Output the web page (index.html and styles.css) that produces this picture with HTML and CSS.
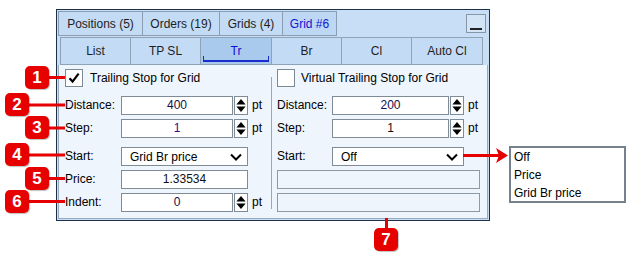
FILE: index.html
```html
<!DOCTYPE html>
<html lang="en">
<head>
    <meta charset="UTF-8">
    <title>Grid #6 - Trailing</title>
    <link rel="stylesheet" href="styles.css">
</head>
<body>
<div class="stage">
    <div class="panel">
        <div class="tabs">
            <div class="tab t-pos">Positions (5)</div>
            <div class="tab t-ord">Orders (19)</div>
            <div class="tab t-grids">Grids (4)</div>
            <div class="tab t-grid active">Grid #6</div>
            <div class="min-btn"><span></span></div>
        </div>

        <div class="subtabs">
            <div class="subtab s-wide">List</div>
            <div class="subtab">TP SL</div>
            <div class="subtab s-wide active">Tr</div>
            <div class="subtab">Br</div>
            <div class="subtab">Cl</div>
            <div class="subtab s-wide">Auto Cl</div>
        </div>

        <div class="content">
            <div class="col col-left">
                <div class="check-row">
                    <span class="checkbox">
                        <svg width="16" height="16" viewBox="0 0 16 16"><path d="M3.5 8.2 L6.6 11.6 L12.6 3.6" fill="none" stroke="#000" stroke-width="2.2"/></svg>
                    </span>
                    <span>Trailing Stop for Grid</span>
                </div>
                <div class="form form-left">
                    <span class="lbl">Distance:</span>
                    <span class="input">400</span>
                    <span class="spin"><svg width="13" height="17" viewBox="0 0 13 17"><polygon points="1.5,7.5 6.5,1.5 11.5,7.5"/><polygon points="1.5,9.5 11.5,9.5 6.5,15.5"/></svg></span>
                    <span class="unit">pt</span>

                    <span class="lbl">Step:</span>
                    <span class="input step">1</span>
                    <span class="spin"><svg width="13" height="17" viewBox="0 0 13 17"><polygon points="1.5,7.5 6.5,1.5 11.5,7.5"/><polygon points="1.5,9.5 11.5,9.5 6.5,15.5"/></svg></span>
                    <span class="unit">pt</span>

                    <span class="lbl">Start:</span>
                    <span class="select">Grid Br price
                        <svg width="12" height="8" viewBox="0 0 12 8"><polyline points="1,1.5 6,6.5 11,1.5" fill="none" stroke="#000" stroke-width="2"/></svg>
                    </span>
                    <span></span>

                    <span class="lbl">Price:</span>
                    <span class="input wide plain">1.33534</span>
                    <span></span>

                    <span class="lbl">Indent:</span>
                    <span class="input">0</span>
                    <span class="spin"><svg width="13" height="17" viewBox="0 0 13 17"><polygon points="1.5,7.5 6.5,1.5 11.5,7.5"/><polygon points="1.5,9.5 11.5,9.5 6.5,15.5"/></svg></span>
                    <span class="unit">pt</span>
                </div>
            </div>

            <div class="divider"></div>

            <div class="col col-right">
                <div class="check-row">
                    <span class="checkbox"></span>
                    <span>Virtual Trailing Stop for Grid</span>
                </div>
                <div class="form form-right">
                    <span class="lbl">Distance:</span>
                    <span class="input">200</span>
                    <span class="spin"><svg width="13" height="17" viewBox="0 0 13 17"><polygon points="1.5,7.5 6.5,1.5 11.5,7.5"/><polygon points="1.5,9.5 11.5,9.5 6.5,15.5"/></svg></span>
                    <span class="unit">pt</span>

                    <span class="lbl">Step:</span>
                    <span class="input plain">1</span>
                    <span class="spin"><svg width="13" height="17" viewBox="0 0 13 17"><polygon points="1.5,7.5 6.5,1.5 11.5,7.5"/><polygon points="1.5,9.5 11.5,9.5 6.5,15.5"/></svg></span>
                    <span class="unit">pt</span>

                    <span class="lbl">Start:</span>
                    <span class="select">Off
                        <svg width="12" height="8" viewBox="0 0 12 8"><polyline points="1,1.5 6,6.5 11,1.5" fill="none" stroke="#000" stroke-width="2"/></svg>
                    </span>
                    <span></span>

                    <span class="blank"></span>
                    <span class="blank"></span>
                </div>
            </div>
        </div>
    </div>

    <div class="dropdown">
        <div>Off</div>
        <div>Price</div>
        <div>Grid Br price</div>
    </div>

    <svg class="callouts" width="634" height="258" viewBox="0 0 634 258">
        <g stroke="#e60000" stroke-width="3" fill="none">
            <path d="M48 77.5 H65"/>
            <path d="M28 105 H65"/>
            <path d="M48 128 H65"/>
            <path d="M28 155 H65"/>
            <path d="M48 178.5 H65"/>
            <path d="M28 201.5 H65"/>
            <path d="M386.5 218 V230"/>
            <path d="M463 155.5 H500"/>
        </g>
        <polygon points="496,148 508,155.5 496,163 499,155.5" fill="#e60000"/>
    </svg>

    <div class="badge b1">1</div>
    <div class="badge b2">2</div>
    <div class="badge b3">3</div>
    <div class="badge b4">4</div>
    <div class="badge b5">5</div>
    <div class="badge b6">6</div>
    <div class="badge b7">7</div>
</div>
</body>
</html>
```

FILE: styles.css
```css
* {
    box-sizing: border-box;
}
body {
    margin: 0;
    background: #fff;
    color: #000;
    font-family: "Liberation Sans", Arial, sans-serif;
    font-size: 12px;
}
.stage {
    position: relative;
    width: 634px;
    height: 258px;
    padding: 9px 0 0 56px;
    overflow: hidden;
}

/* panel frame */
.panel {
    width: 434px;
    height: 212px;
    border: 1px solid #1e3148;
    background: #c8def6;
    padding: 1px;
    display: flex;
    flex-direction: column;
}

/* top tabs */
.tabs {
    display: flex;
    height: 25px;
}
.tab {
    height: 25px;
    border: 1px solid #8a9db1;
    border-left: none;
    background: #c3dbf5;
    color: #1e1e1e;
    display: flex;
    align-items: center;
    justify-content: center;
}
.tab:first-child {
    border-left: 1px solid #8a9db1;
}
.t-pos { width: 85px; }
.t-ord { width: 77px; }
.t-grids { width: 63px; }
.t-grid { width: 54px; }
.tab.active {
    color: #1414d2;
    background: #bdd7f4;
}
.min-btn {
    position: relative;
    width: 20px;
    height: 19px;
    margin: 3px 2px 0 auto;
    border: 1px solid #8797a8;
    background: #d3e4f7;
}
.min-btn span {
    position: absolute;
    left: 3px;
    right: 3px;
    bottom: 2px;
    height: 2px;
    background: #222;
}

/* sub tabs */
.subtabs {
    display: flex;
    height: 28px;
    margin: 1px 0 0 2px;
}
.subtab {
    position: relative;
    width: 70px;
    height: 28px;
    border: 1px solid #8fa3b7;
    border-left: none;
    background: #c3dbf5;
    color: #1e1e1e;
    display: flex;
    align-items: center;
    justify-content: center;
}
.subtab:first-child {
    border-left: 1px solid #8fa3b7;
}
.subtab.s-wide { width: 71px; }
.subtab.active {
    background: #a9c9ed;
    color: #1010d0;
}
.subtab.active::after {
    content: "";
    position: absolute;
    left: 2px;
    right: 2px;
    bottom: 2px;
    height: 4px;
    border: 1px solid #1a2ccc;
    border-top: none;
    border-bottom-width: 2px;
}

/* content */
.content {
    flex: 1;
    display: flex;
    padding: 4px 0 0 6px;
    background: #eef5fc;
    border: 1px solid #98abbe;
    border-top: none;
}
.col-left {
    width: 206px;
}
.divider {
    width: 1px;
    height: 132px;
    margin-top: 8px;
    background: #98a8b8;
}
.col-right {
    margin-left: 5px;
}
.check-row {
    display: flex;
    align-items: center;
    gap: 7px;
    height: 18px;
}
.col-right .check-row {
    gap: 6px;
}
.checkbox {
    width: 18px;
    height: 18px;
    border: 1px solid #7d8a96;
    background: #fff;
    display: flex;
    align-items: center;
    justify-content: center;
}

/* form grid */
.form {
    display: grid;
    grid-template-rows: 19px 19px 24px 19px 19px;
    row-gap: 4px;
    align-items: end;
    margin-top: 9px;
}
.form-left {
    grid-template-columns: 56px 112px 15px auto;
}
.form-right {
    grid-template-columns: 55px 117px 15px auto;
}
.lbl {
    height: 19px;
    line-height: 19px;
}
.input {
    height: 19px;
    line-height: 17px;
    border: 1px solid #7f8c98;
    background: #fff;
    color: #10104e;
    text-align: center;
}
.input.step {
    color: #3c0a80;
}
.input.plain {
    color: #111;
}
.input.wide {
    grid-column: span 2;
}
.spin {
    height: 19px;
    margin-left: 1px;
    border: 1px solid #7f8c98;
    background: #fff;
    display: flex;
    align-items: center;
    justify-content: center;
}
.spin svg {
    fill: #000;
}
.unit {
    height: 19px;
    line-height: 19px;
    padding-left: 4px;
}
.select {
    grid-column: span 2;
    height: 19px;
    border: 1px solid #7f8c98;
    background: #fff;
    padding: 0 5px 0 8px;
    display: flex;
    align-items: center;
    justify-content: space-between;
}
.blank {
    grid-column: 1 / -1;
    width: 203px;
    height: 19px;
    border: 1px solid #8d9aa6;
    background: #eef5fc;
}

/* popup list */
.dropdown {
    position: absolute;
    left: 509px;
    top: 146px;
    width: 117px;
    height: 57px;
    border: 2px solid #75828e;
    background: #fff;
    padding-left: 3px;
    line-height: 18px;
}

/* callouts */
.callouts {
    position: absolute;
    left: 0;
    top: 0;
    pointer-events: none;
}
.badge {
    position: absolute;
    width: 24px;
    height: 23px;
    border-radius: 5px;
    background: #e60000;
    color: #fff;
    font-size: 17px;
    font-weight: bold;
    display: flex;
    align-items: center;
    justify-content: center;
    box-shadow: 1px 1px 1px rgba(0, 0, 0, 0.25);
}
.b1 { left: 25px; top: 66px; }
.b2 { left: 5px; top: 93px; }
.b3 { left: 25px; top: 116px; }
.b4 { left: 5px; top: 143px; }
.b5 { left: 25px; top: 167px; }
.b6 { left: 5px; top: 190px; }
.b7 { left: 374px; top: 228px; }
```
